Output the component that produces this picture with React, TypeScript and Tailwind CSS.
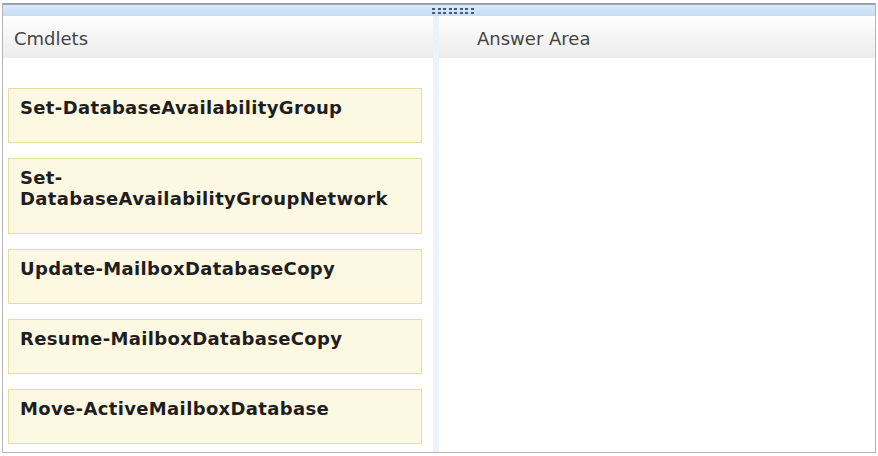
const cmdlets = [
  'Set-DatabaseAvailabilityGroup',
  'Set-\nDatabaseAvailabilityGroupNetwork',
  'Update-MailboxDatabaseCopy',
  'Resume-MailboxDatabaseCopy',
  'Move-ActiveMailboxDatabase',
]

function Grip() {
  return (
    <div className="grid grid-cols-8 gap-x-[2.5px] gap-y-[2px]">
      {Array.from({ length: 16 }).map((_, i) => (
        <span key={i} className="w-[3px] h-[2px] bg-[#4a5a70]" />
      ))}
    </div>
  )
}

export default function App() {
  return (
    <div
      className="w-[878px] h-[456px] bg-white pt-[3px] pl-[2px] overflow-hidden"
      style={{ fontFamily: '"DejaVu Sans", Verdana, sans-serif' }}
    >
      <div className="w-[874px] h-[450px] border-x border-b border-[#b4b4b4] flex flex-col">
        {/* top splitter bar */}
        <div className="h-[13px] border-t-2 border-[#98a2ac] bg-gradient-to-b from-[#d9eaf9] to-[#c6ddf3] flex items-center">
          <div className="w-[429px]" />
          <Grip />
        </div>

        <div className="flex flex-1">
          {/* Cmdlets column */}
          <div className="w-[430px] flex flex-col">
            <div className="h-[42px] flex items-center pl-[11px] pt-[2px] bg-gradient-to-b from-white to-[#ececec] text-[18px] text-[#444]">
              Cmdlets
            </div>
            <div className="flex flex-col gap-[15px] pt-[30px] pl-[5px]">
              {cmdlets.map((c) => (
                <div
                  key={c}
                  className="w-[414px] border border-[#e6dea0] bg-[#fdf8e2] pl-[11px] pt-[8px] pb-[24px] text-[18px] leading-[21px] tracking-[0.35px] font-bold text-[#1e1e1e] whitespace-pre-line"
                >
                  {c}
                </div>
              ))}
            </div>
          </div>

          {/* divider */}
          <div className="w-[6px] bg-[#eaf2fb]" />

          {/* Answer area */}
          <div className="flex-1 flex flex-col">
            <div className="h-[42px] flex items-center pl-[38px] pt-[2px] bg-gradient-to-b from-white to-[#ececec] text-[18px] text-[#444]">
              Answer Area
            </div>
          </div>
        </div>
      </div>
    </div>
  )
}
